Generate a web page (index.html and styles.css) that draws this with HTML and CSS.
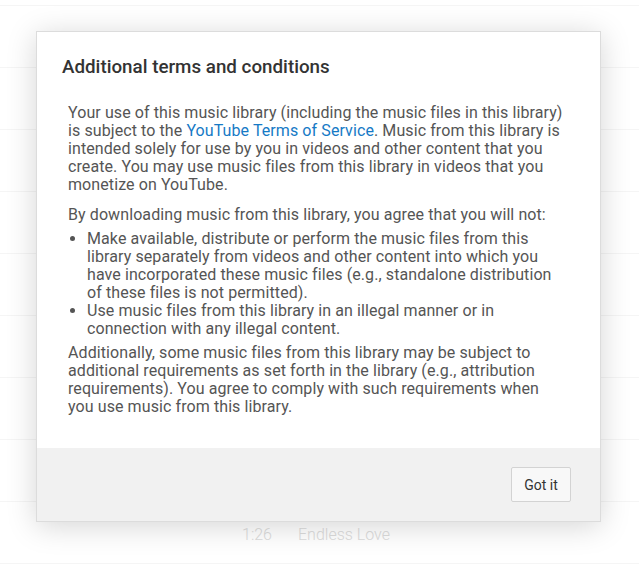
FILE: index.html
```html
<!DOCTYPE html>
<html>
<head>
<meta charset="utf-8">
<link rel="stylesheet" href="styles.css">
</head>
<body>
<div class="page">
  <ul class="tracks">
    <li class="track"><span class="dur">1:48</span><span class="name">Dance of the Sugar Plum Fairy</span></li>
    <li class="track"><span class="dur">2:05</span><span class="name">Morning Mood</span></li>
    <li class="track"><span class="dur">3:12</span><span class="name">Hall of the Mountain King</span></li>
    <li class="track"><span class="dur">2:44</span><span class="name">Canon in D</span></li>
    <li class="track"><span class="dur">1:59</span><span class="name">Spring</span></li>
    <li class="track"><span class="dur">2:31</span><span class="name">Clair de Lune</span></li>
    <li class="track"><span class="dur">3:02</span><span class="name">Gymnopedie No 1</span></li>
    <li class="track"><span class="dur">2:17</span><span class="name">Brahms Lullaby</span></li>
    <li class="track"><span class="dur">1:26</span><span class="name">Endless Love</span></li>
  </ul>

  <div class="dialog">
    <div class="dialog-main">
      <h2 class="dialog-title">Additional terms and conditions</h2>
      <div class="dialog-body">
        <p class="para">Your use of this music library (including the music files in this library) is subject to the <a class="link" href="#">YouTube Terms of Service</a>. Music from this library is intended solely for use by you in videos and other content that you create. You may use music files from this library in videos that you monetize on YouTube.</p>
        <p class="para lead">By downloading music from this library, you agree that you will not:</p>
        <ul class="rules">
          <li>Make available, distribute or perform the music files from this library separately from videos and other content into which you have incorporated these music files (e.g., standalone distribution of these files is not permitted).</li>
          <li>Use music files from this library in an illegal manner or in connection with any illegal content.</li>
        </ul>
        <p class="para">Additionally, some music files from this library may be subject to additional requirements as set forth in the library (e.g., attribution requirements). You agree to comply with such requirements when you use music from this library.</p>
      </div>
    </div>
    <div class="dialog-footer">
      <button class="btn">Got it</button>
    </div>
  </div>
</div>
</body>
</html>
```

FILE: styles.css
```css
* { box-sizing: border-box; }
html, body { margin: 0; padding: 0; background: #fff; }
body {
  font-family: Roboto, "Liberation Sans", sans-serif;
  width: 639px;
  height: 567px;
  overflow: hidden;
}
.page { position: relative; width: 639px; height: 567px; padding-top: 5px; }

.tracks {
  list-style: none;
  margin: 0;
  padding: 0;
  border-top: 1px solid #f5f5f5;
}
.track {
  height: 62px;
  border-bottom: 1px solid #f5f5f5;
  display: flex;
  align-items: center;
  padding-left: 242px;
  padding-top: 3px;
  font-size: 16px;
  color: #dcdcdc;
  font-weight: 300;
}
.dur { width: 56px; }

.dialog {
  position: absolute;
  left: 36px;
  top: 31px;
  width: 565px;
  height: 491px;
  background: #fff;
  border: 1px solid #dcdcdc;
  box-shadow: 0 4px 28px rgba(0,0,0,0.17);
  display: flex;
  flex-direction: column;
}
.dialog-main { flex: 1; padding: 23px 0 0 25px; }
.dialog-title {
  margin: 0;
  font-size: 18.8px;
  font-weight: 500;
  line-height: 24px;
  color: #333;
}
.dialog-body {
  margin-top: 25px;
  padding-left: 6px;
  width: 504px;
  font-size: 16px;
  letter-spacing: 0.09px;
  line-height: 18px;
  color: #555;
}
.para { margin: 0 0 12px; }
.para.lead { margin-bottom: 6px; }
.link { color: #167ac6; text-decoration: none; }
.rules {
  margin: 0 0 6px;
  padding-left: 19px;
}
.dialog-footer {
  height: 73px;
  background: #f1f1f1;
  display: flex;
  align-items: center;
  justify-content: flex-end;
  padding-right: 29px;
}
.btn {
  width: 60px;
  height: 35px;
  background: #f8f8f8;
  border: 1px solid #d3d3d3;
  border-radius: 2px;
  font-family: Roboto, "Liberation Sans", sans-serif;
  font-size: 14px;
  color: #333;
  padding: 0;
}
```
